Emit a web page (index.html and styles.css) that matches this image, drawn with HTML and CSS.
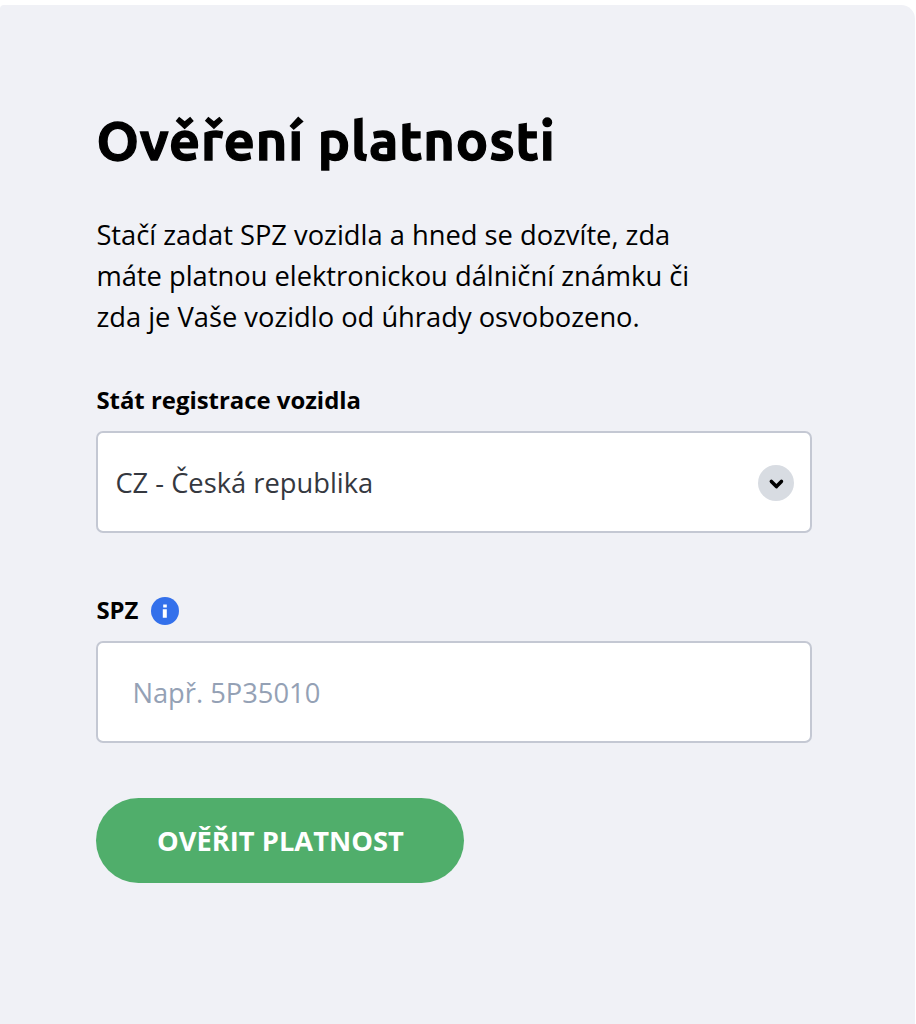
FILE: index.html
```html
<!DOCTYPE html>
<html lang="cs">

<head>
    <meta charset="UTF-8">
    <meta name="viewport" content="width=device-width, initial-scale=1.0">
    <title>Ověření platnosti</title>
    <link rel="stylesheet" href="styles.css">
</head>

<body>

    <main class="card">
        <h1>Ověření platnosti</h1>

        <p class="intro">Stačí zadat SPZ vozidla a hned se dozvíte, zda máte platnou elektronickou dálniční známku či zda je Vaše vozidlo od úhrady osvobozeno.</p>

        <form>
            <div class="label" id="country-label">Stát registrace vozidla</div>
            <div class="field select" role="combobox" aria-labelledby="country-label" tabindex="0">
                <span>CZ - Česká republika</span>
                <svg class="arrow" viewBox="0 0 36 36">
                    <circle cx="18" cy="18" r="18" fill="#d8dce2" />
                    <path d="M13.4 16.4l5 5.2 5-5.2" fill="none" stroke="#000" stroke-width="3.6" stroke-linecap="round" stroke-linejoin="round" />
                </svg>
            </div>

            <label class="label label-spz" for="spz">SPZ
                <svg class="info" viewBox="0 0 28 28">
                    <circle cx="14" cy="14" r="14" fill="#3370eb" />
                    <path d="M12.2 7.4h3.6v3.2h-3.6zM11.8 12.3h4v8.4h-4z" fill="#fff" />
                </svg>
            </label>
            <input class="field" type="text" id="spz" placeholder="Např. 5P35010">

            <button class="submit" type="button">OVĚŘIT PLATNOST</button>
        </form>
    </main>

</body>

</html>
```
FILE: styles.css
```css
* {
    margin: 0;
    padding: 0;
    box-sizing: border-box;
}

body {
    background-color: white;
    color: black;
    font-family: "Open Sans", sans-serif;
    padding-top: 5px;
}

.card {
    width: 915px;
    height: 1019px;
    padding: 98px 103px 0 96.4px;
    background-color: #f0f1f6;
    border-radius: 4px 14px 0 0;
}

h1 {
    font-family: Ubuntu, "Noto Sans", sans-serif;
    font-size: 54px;
    font-weight: bold;
    line-height: 74px;
    letter-spacing: 0.9px;
    white-space: nowrap;
    -webkit-text-stroke: 1.3px black;
}

.intro {
    width: 610px;
    margin-top: 37px;
    font-size: 27.3px;
    line-height: 41px;
}

.label {
    display: flex;
    align-items: center;
    gap: 13px;
    height: 36px;
    margin-top: 45px;
    padding-bottom: 2px;
    font-size: 23.9px;
    font-weight: bold;
}

.label-spz {
    margin-top: 59px;
}

.field {
    display: block;
    width: 716px;
    height: 102px;
    margin-top: 13px;
    border: 2px solid #c4c8d3;
    border-radius: 7px;
    background-color: white;
    font-family: inherit;
    font-size: 27.3px;
}

.select {
    display: flex;
    align-items: center;
    justify-content: space-between;
    padding: 0 16px 0 17px;
    color: #35383f;
}

.arrow {
    width: 36px;
    height: 36px;
    margin-top: 2px;
}

.info {
    width: 28px;
    height: 28px;
    margin-top: 4px;
}

input.field {
    padding: 0 34px;
}

input::placeholder {
    color: #94a1b5;
}

.submit {
    display: block;
    width: 368px;
    height: 85px;
    margin-top: 55px;
    border: none;
    border-radius: 43px;
    background-color: #50ae6b;
    color: white;
    font-family: inherit;
    font-size: 27.3px;
    font-weight: bold;
    cursor: pointer;
}
```
